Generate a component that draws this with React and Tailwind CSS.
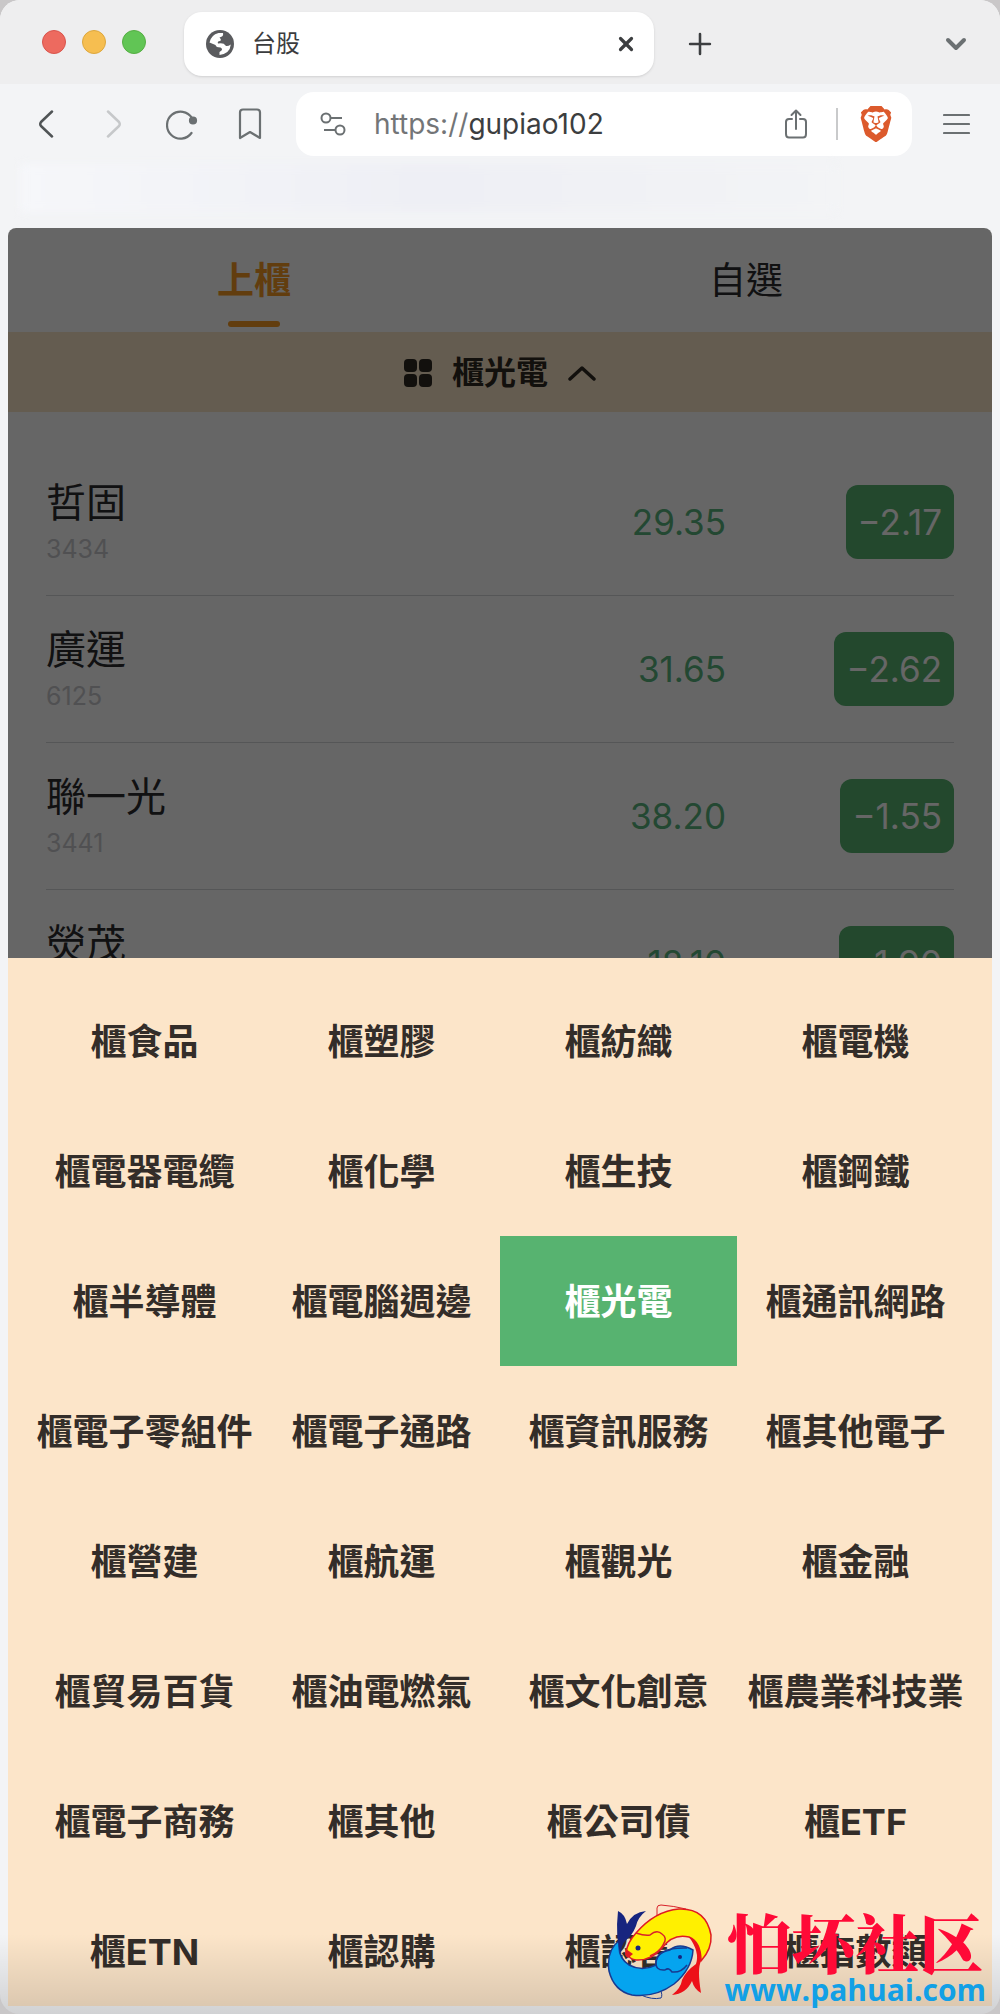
import React, { useState } from 'react';
import { ChevronDown, Plus, X } from 'lucide-react';
import { SiBrave } from 'react-icons/si';

const stocks = [
  { name: '哲固', code: '3434', price: '29.35', change: '−2.17' },
  { name: '廣運', code: '6125', price: '31.65', change: '−2.62' },
  { name: '聯一光', code: '3441', price: '38.20', change: '−1.55' },
  { name: '熒茂', code: '4729', price: '18.10', change: '−1.90' },
];

const sectors = [
  '櫃食品', '櫃塑膠', '櫃紡織', '櫃電機',
  '櫃電器電纜', '櫃化學', '櫃生技', '櫃鋼鐵',
  '櫃半導體', '櫃電腦週邊', '櫃光電', '櫃通訊網路',
  '櫃電子零組件', '櫃電子通路', '櫃資訊服務', '櫃其他電子',
  '櫃營建', '櫃航運', '櫃觀光', '櫃金融',
  '櫃貿易百貨', '櫃油電燃氣', '櫃文化創意', '櫃農業科技業',
  '櫃電子商務', '櫃其他', '櫃公司債', '櫃ETF',
  '櫃ETN', '櫃認購', '櫃認售', '櫃指數類',
];

const GlobeIcon = () => (
  <svg viewBox="0 0 28 28" className="size-7">
    <circle cx="14" cy="14" r="14" fill="#5a5b5e" />
    <path
      d="M3.5 12.5 Q5 5 12.5 3 H17 Q18 6.5 13.5 7.5 Q16 10 14 11 Q11 11 12 13.5 Q18 12.5 19.5 15.5 Q21 17 24.8 14.5 Q24 23.5 13.5 25 V22 Q18 19.5 14.5 17.5 Q10 17.5 9.5 15 Z"
      fill="#fff"
    />
  </svg>
);

const TabStrip = () => (
  <header className="flex h-[84px] shrink-0 items-center bg-[#eeeeef] pl-[42px] pr-8">
    <div className="flex w-[142px] shrink-0 gap-4">
      <span className="size-6 rounded-full border border-[#d9544c] bg-[#ed6a5f]" />
      <span className="size-6 rounded-full border border-[#dda73d] bg-[#f6be50]" />
      <span className="size-6 rounded-full border border-[#55ae43] bg-[#61c555]" />
    </div>
    <div className="mt-1 flex h-16 max-w-[470px] flex-1 items-center rounded-[18px] bg-white pl-[22px] pr-[17px] shadow-sm">
      <GlobeIcon />
      <span className="ml-[18px] flex-1 text-[24px] text-[#3b3c3e]">台股</span>
      <button aria-label="Close tab" className="text-[#3c3e40]">
        <X className="size-[22px]" strokeWidth={3.5} />
      </button>
    </div>
    <button aria-label="New tab" className="ml-[29px] mt-1 text-[#3c3e40]">
      <Plus className="size-[34px]" strokeWidth={1.8} />
    </button>
    <button aria-label="Search tabs" className="ml-auto mt-1 text-[#6b7072]">
      <ChevronDown className="-mr-1 size-8" strokeWidth={3} />
    </button>
  </header>
);

const ReloadIcon = () => (
  <svg viewBox="0 0 32 32" className="size-8" fill="none" stroke="currentColor" strokeWidth="2.2" strokeLinecap="round">
    <path d="M25.5 25 A13.5 13.5 0 1 1 26 10" />
    <circle cx="27" cy="12.5" r="3" fill="currentColor" />
  </svg>
);

const Toolbar = () => (
  <nav className="flex h-20 shrink-0 items-center pl-[38px] pr-[30px] text-[#6b7072]">
    <button aria-label="Back" className="w-[62px] text-[#505456]">
      <svg viewBox="0 0 18 30" className="h-[30px] w-[18px]" fill="none" stroke="currentColor" strokeWidth="2.5" strokeLinecap="round" strokeLinejoin="round">
        <path d="M14 2.5 L3 13 Q1.5 15 3 17 L14 27.5" />
      </svg>
    </button>
    <button aria-label="Forward" className="w-[66px] pl-1 text-[#c6c8ca]">
      <svg viewBox="0 0 18 30" className="h-[30px] w-[18px]" fill="none" stroke="currentColor" strokeWidth="2.5" strokeLinecap="round" strokeLinejoin="round">
        <path d="M4 2.5 L15 13 Q16.5 15 15 17 L4 27.5" />
      </svg>
    </button>
    <button aria-label="Reload" className="w-[72px]">
      <ReloadIcon />
    </button>
    <button aria-label="Bookmark" className="w-[58px]">
      <svg viewBox="0 0 24 32" className="h-8 w-6" fill="none" stroke="currentColor" strokeWidth="2.2" strokeLinejoin="round">
        <path d="M5 1.5 H19 Q22 1.5 22 4.5 V30 L12 24 L2 30 V4.5 Q2 1.5 5 1.5 Z" />
      </svg>
    </button>
    <div className="flex h-16 min-w-0 flex-1 items-center rounded-[18px] bg-white pl-6 pr-[18px]">
      <svg viewBox="0 0 26 24" className="h-6 w-[26px] shrink-0" fill="none" stroke="currentColor" strokeWidth="2">
        <circle cx="6" cy="6" r="4.5" />
        <path d="M10.5 6 H22 M4 18 H15.5" />
        <circle cx="20" cy="18" r="4.5" />
      </svg>
      <div className="ml-7 min-w-0 flex-1 whitespace-nowrap font-['Inter'] text-[28px] text-[#737577]">
        https://<span className="text-[#3c3e40]">gupiao102</span>
      </div>
      <button aria-label="Share">
        <svg viewBox="0 0 24 32" className="h-8 w-6" fill="none" stroke="currentColor" strokeWidth="2" strokeLinecap="round" strokeLinejoin="round">
          <path d="M8 11 H5 Q2 11 2 14 V26 Q2 29.5 5 29.5 H19 Q22 29.5 22 26 V14 Q22 11 19 11 H16 M12 21 V2.5 M7.5 7 L12 2.5 L16.5 7" />
        </svg>
      </button>
      <span className="ml-7 mr-5 h-8 w-0.5 bg-[#c9cacb]" />
      <button aria-label="Shields">
        <SiBrave className="size-9 text-[#dc5a2c]" />
      </button>
    </div>
    <button aria-label="Menu" className="ml-[31px]">
      <svg viewBox="0 0 27 22" className="h-[22px] w-[27px]" fill="none" stroke="currentColor" strokeWidth="2.2" strokeLinecap="round">
        <path d="M1 2 H26 M1 11 H26 M1 20 H26" />
      </svg>
    </button>
  </nav>
);

const StockRow = ({ stock }) => (
  <li className="flex h-[147px] items-center border-b border-[#d5d7d9]">
    <div className="flex-1 pt-1">
      <div className="text-[40px] leading-[50px] text-[#2b2c2e]">{stock.name}</div>
      <div className="font-['Inter'] text-[25px] leading-[42px] text-[#c8c9cc]">{stock.code}</div>
    </div>
    <div className="font-['Inter'] text-[35px] text-[#57b37d]">{stock.price}</div>
    <div className="flex w-[228px] justify-end">
      <span className="rounded-xl bg-[#57b370] px-3 font-['Inter'] text-[35px] leading-[74px] text-white">
        {stock.change}
      </span>
    </div>
  </li>
);

const FishLogo = () => (
  <svg viewBox="0 0 106 98" className="h-[98px] w-[106px]" strokeLinejoin="round">
    <path d="M50 12 V4 Q50 1 54 1 Q67 2 79 5" fill="none" stroke="#d8222a" />
    <path d="M54 94 Q45 96 34 91 M54 94 Q56 91 53 85" fill="none" stroke="#173a92" />
    {/* yellow fish */}
    <path d="M19 49 Q20 39 29 29 Q48 7 72 5 Q99 4 104 31 Q105 45 94 57 Q94 38 82 33 Q66 29 55 44 Q44 57 29 56 Q23 55 22 52 Q18 52 19 49 Z" fill="#fff000" stroke="#e01b22" strokeWidth="1.5" />
    <path d="M29 29 Q38 32 43 31 Q50 25 55 30 Q61 34 56 41 Q52 48 43 52" fill="none" stroke="#d8222a" strokeWidth="1.5" />
    <path d="M19 45 L26 50 L21 54 Q17 52 19 45 Z" fill="#e01b22" />
    <path d="M82 33 Q94 38 94 57 Q90 65 94 89 Q87 85 85 77 Q79 90 65 91 Q74 84 75 76 Q79 67 89 60 Q93 48 82 33 Z" fill="#ed1018" />
    {/* blue fish */}
    <path d="M13 36 Q9 52 22 61 Q35 68 49 61 Q48 49 63 46 Q72 38 86 46 Q85 65 67 80 Q48 94 25 91 Q7 87 2 67 Q-1 46 13 36 Z" fill="#05a4ef" stroke="#173a92" strokeWidth="1.5" />
    <path d="M80 44 Q52 43 49 57 Q48 67 58 66 Q62 63 65 68 Q74 69 80 61" fill="none" stroke="#173a92" strokeWidth="1.5" />
    <path d="M14 51 Q8 34 11 7 Q18 10 20 20 Q26 8 39 7 Q31 13 29 22 Q25 32 18 37 Q14 41 14 51 Z" fill="#17257f" />
    <circle cx="31" cy="44" r="2.5" fill="#17257f" />
    <circle cx="73" cy="53" r="2" fill="#17257f" />
  </svg>
);

const Watermark = () => (
  <a href="#pahuai" className="absolute bottom-1.5 right-3.5 flex items-end gap-3">
    <span className="pb-1.5">
      <FishLogo />
    </span>
    <span className="flex flex-col items-center">
      <span className="font-['Noto_Serif_CJK_SC','Noto_Sans_CJK_SC',serif] text-[64px] font-black leading-[64px] text-[#ff0a37]">
        怕坏社区
      </span>
      <span className="font-['Open_Sans'] text-[30px] font-bold leading-9 text-[#12a0e6]">www.pahuai.com</span>
    </span>
  </a>
);

export default function App() {
  const [selected, setSelected] = useState('櫃光電');

  return (
    <div lang="zh-Hant" className="h-screen bg-[#c9c7c8] font-['Inter','Noto_Sans_CJK_TC',sans-serif]">
      <div className="relative flex h-full flex-col overflow-hidden rounded-[20px] bg-[#f3f4f6] pb-2">
        <TabStrip />
        <Toolbar />
        <div className="h-16 shrink-0 px-5">
          <div className="mr-36 h-12 bg-linear-to-r from-[#f6f7fa] via-[#eeeff5] to-[#f3f4f6] blur-xs" />
        </div>

        <main className="mx-2 flex min-h-0 flex-1 flex-col overflow-hidden rounded-t-lg">
          <section className="relative min-h-0 flex-1 overflow-hidden bg-white">
            <div className="grid h-[104px] grid-cols-2 text-[37px]">
              <button className="flex flex-col items-center font-bold text-[#f59a23]">
                <span className="mt-[26px] leading-[54px]">上櫃</span>
                <span className="mt-[13px] h-1.5 w-[52px] rounded-full bg-[#f59a23]" />
              </button>
              <button className="flex flex-col items-center text-[#2b2c2e]">
                <span className="mt-[26px] leading-[54px]">自選</span>
              </button>
            </div>
            <button className="flex h-20 w-full items-center justify-center gap-5 bg-[#fbe5c8] pt-0.5 text-[32px] font-bold text-[#2e2a22]">
              <svg viewBox="0 0 28 28" className="size-7" fill="currentColor">
                <rect width="13" height="13" rx="4" />
                <rect x="15" width="13" height="13" rx="4" />
                <rect y="15" width="13" height="13" rx="4" />
                <rect x="15" y="15" width="13" height="13" rx="4" />
              </svg>
              {selected}
              <svg viewBox="0 0 28 16" className="h-4 w-7" fill="none" stroke="currentColor" strokeWidth="3.5" strokeLinecap="round" strokeLinejoin="round">
                <path d="M2 14 L14 3 L26 14" />
              </svg>
            </button>
            <ul className="px-[38px] pt-[37px]">
              {stocks.map((stock) => (
                <StockRow key={stock.code} stock={stock} />
              ))}
            </ul>
            <div className="absolute inset-0 bg-black/60" />
          </section>

          <section className="shrink-0 overflow-hidden bg-[#fce5c9] px-[18px] pt-[18px]">
            {/* last row runs under the bottom edge of the window */}
            <div className="-mb-2.5 grid grid-cols-4">
              {sectors.map((sector) => (
                <button
                  key={sector}
                  onClick={() => setSelected(sector)}
                  className={`whitespace-nowrap pb-[37px] pt-[39px] text-center text-[36px] font-bold leading-[54px] ${
                    sector === selected ? 'bg-[#57b370] text-white' : 'text-[#332d29]'
                  }`}
                >
                  {sector}
                </button>
              ))}
            </div>
          </section>
        </main>

        <div className="pointer-events-none absolute inset-x-0 bottom-0 h-20 bg-linear-to-b from-transparent to-black/14" />
        <Watermark />
      </div>
    </div>
  );
}
